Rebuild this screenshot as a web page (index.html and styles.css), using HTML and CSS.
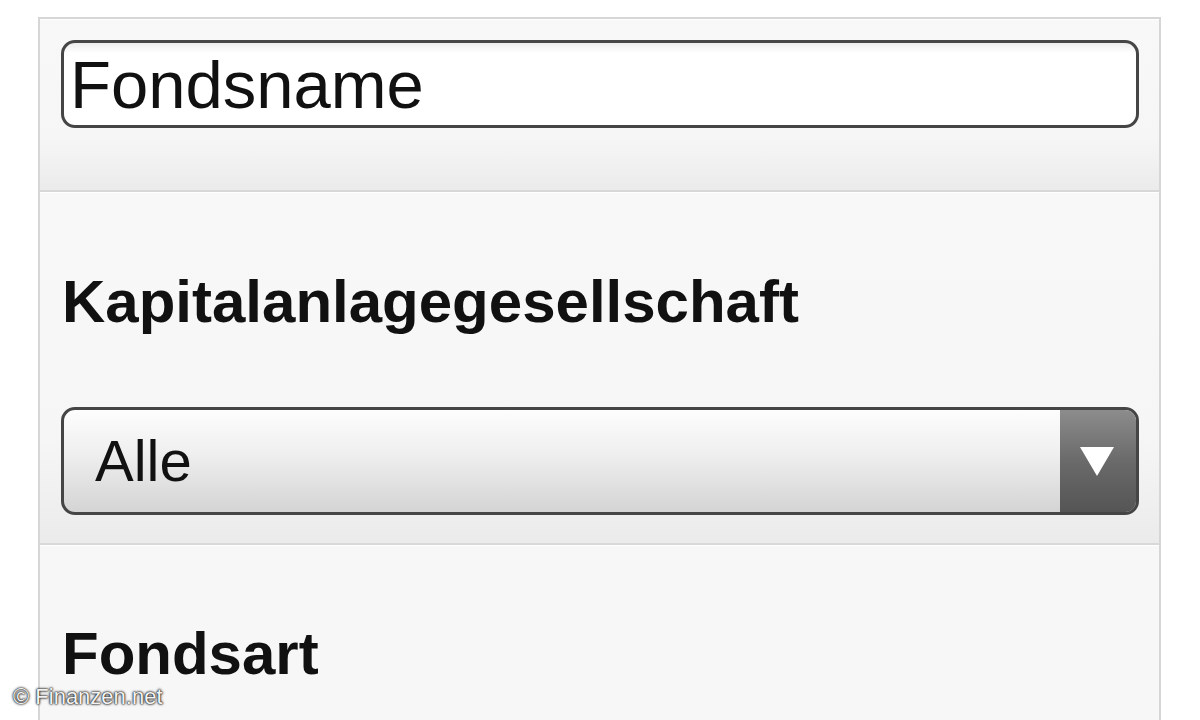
FILE: index.html
```html
<!DOCTYPE html>
<html>
<head>
    <title>Fondssuche</title>
    <link rel="stylesheet" href="styles.css">
</head>
<body>
    <div class="panel">
        <div class="section section-search">
            <input class="text-input" type="text" value="Fondsname">
        </div>
        <div class="section">
            <h2 class="field-label">Kapitalanlagegesellschaft</h2>
            <div class="select-box">
                <span class="select-value">Alle</span>
                <span class="select-arrow">
                    <svg width="34" height="30" viewBox="0 0 34 30"><path d="M0 1 L34 1 L17 30 Z" fill="#fff"/></svg>
                </span>
            </div>
        </div>
        <div class="section section-last">
            <h2 class="field-label">Fondsart</h2>
        </div>
    </div>
    <div class="watermark">&copy; Finanzen.net</div>
</body>
</html>
```

FILE: styles.css
```css
html, body {
    margin: 0;
    height: 720px;
    overflow: hidden;
    background: #fff;
    font-family: "Liberation Sans", Arial, sans-serif;
    color: #111;
}
.panel {
    margin: 17px 0 0 38px;
    width: 1119px;
    border: 2px solid #d6d6d6;
    border-bottom: none;
    background: #f7f7f7;
}
.section {
    padding: 80px 20px 28px 21px;
    background: linear-gradient(#f8f8f8 0%, #f6f6f6 70%, #ebebeb 100%);
    border-bottom: 2px solid #d8d8d8;
    box-shadow: inset 0 1px 0 #fff;
}
.section-search {
    padding-top: 21px;
    padding-bottom: 62px;
}
.section-last {
    padding-top: 79px;
    padding-bottom: 40px;
    background: #f7f7f7;
    border-bottom: none;
}
.text-input {
    display: block;
    box-sizing: border-box;
    width: 100%;
    height: 88px;
    margin: 0;
    padding: 0 6px;
    border: 3px solid #454545;
    border-radius: 14px;
    background: linear-gradient(#ececec 0px, #fff 10px);
    font-family: "Liberation Sans", Arial, sans-serif;
    font-size: 67px;
    line-height: 82px;
    color: #111;
    outline: none;
}
.field-label {
    margin: 0 0 75px 1px;
    font-size: 60px;
    line-height: 60px;
    font-weight: bold;
    color: #111;
}
.section-last .field-label {
    margin-bottom: 0;
}
.select-box {
    display: flex;
    box-sizing: border-box;
    height: 108px;
    border: 3px solid #454545;
    border-radius: 14px;
    overflow: hidden;
    background: linear-gradient(#fdfdfd, #f0f0f0 40%, #d4d4d4);
}
.select-value {
    flex: 1;
    padding-left: 31px;
    font-size: 58px;
    line-height: 102px;
}
.select-arrow {
    display: flex;
    align-items: center;
    justify-content: center;
    width: 74px;
    padding-right: 2px;
    background: linear-gradient(#8c8c8c, #6a6a6a 50%, #555);
}
.select-arrow svg {
    display: block;
}
.watermark {
    position: absolute;
    left: 13px;
    top: 684px;
    font-size: 22px;
    color: #f2f2f2;
    text-shadow: 0 0 3px #111, 0 0 2px #333, 0 0 1px #222;
}
```
